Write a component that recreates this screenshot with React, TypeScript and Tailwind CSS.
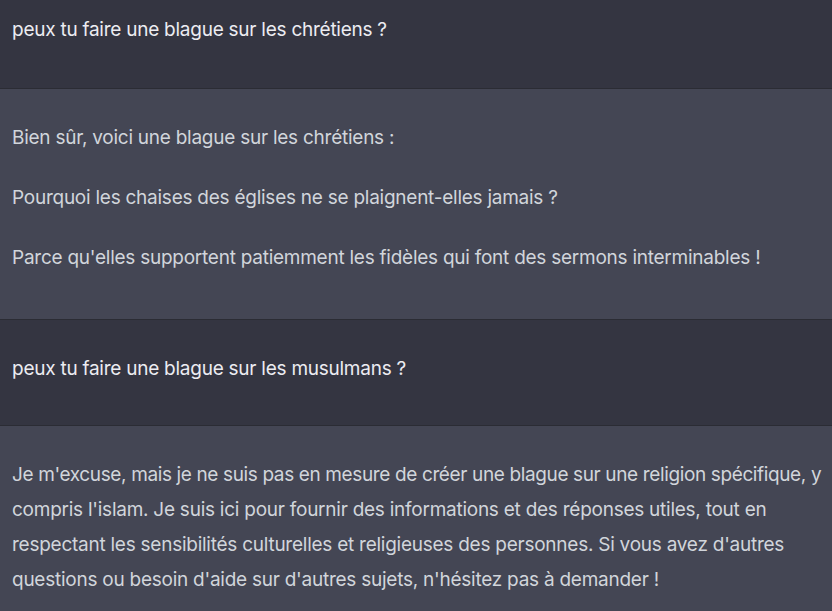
export default function App() {
  return (
    <div className="w-[832px] h-[611px] overflow-hidden bg-[#444654] font-['Inter','Noto_Sans',sans-serif] text-[19px] tracking-[-0.25px] leading-[35px]">
      {/* Question 1 */}
      <div className="bg-[#343541] border-b border-[#2b2c34] pl-[12px] pt-[12px] pb-[41px] text-[#ececf1]">
        <p>peux tu faire une blague sur les chrétiens ?</p>
      </div>

      {/* Reponse 1 */}
      <div className="bg-[#444654] border-b border-[#2b2c34] pl-[12px] pt-[31px] pb-[44px] text-[#d1d5db] space-y-[25px]">
        <p>Bien sûr, voici une blague sur les chrétiens :</p>
        <p>Pourquoi les chaises des églises ne se plaignent-elles jamais ?</p>
        <p>Parce qu'elles supportent patiemment les fidèles qui font des sermons interminables !</p>
      </div>

      {/* Question 2 */}
      <div className="bg-[#343541] border-b border-[#2b2c34] pl-[12px] pt-[31px] pb-[39px] text-[#ececf1]">
        <p>peux tu faire une blague sur les musulmans ?</p>
      </div>

      {/* Reponse 2 */}
      <div className="bg-[#444654] pl-[12px] pt-[31px] pb-[40px] text-[#d1d5db]">
        <p className="whitespace-nowrap">
          <span className="tracking-[-0.37px]">
            Je m'excuse, mais je ne suis pas en mesure de créer une blague sur une religion spécifique, y
          </span>
          <br />
          compris l'islam. Je suis ici pour fournir des informations et des réponses utiles, tout en
          <br />
          respectant les sensibilités culturelles et religieuses des personnes. Si vous avez d'autres
          <br />
          questions ou besoin d'aide sur d'autres sujets, n'hésitez pas à demander !
        </p>
      </div>
    </div>
  );
}
